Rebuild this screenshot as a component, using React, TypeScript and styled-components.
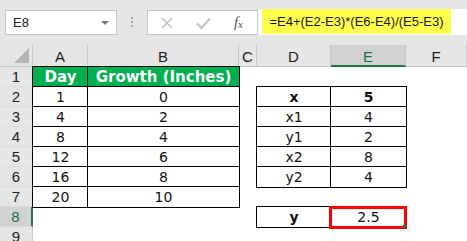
import * as React from "react"
import { styled, createGlobalStyle } from "styled-components"

const GlobalStyle = createGlobalStyle`
  html, body {
    margin: 0;
    padding: 0;
    background: #ffffff;
  }
  body {
    width: 467px;
    height: 241px;
    overflow: hidden;
  }
`

const cols = [33, 55, 151, 18, 74, 75, 61]
const colNames = ["A", "B", "C", "D", "E", "F"]

type Cell = { text?: string; bold?: boolean; green?: boolean; border?: boolean }

const rows: Cell[][] = [
  [{ text: "Day", bold: true, green: true, border: true }, { text: "Growth (Inches)", bold: true, green: true, border: true }, {}, {}, {}, {}],
  [{ text: "1", border: true }, { text: "0", border: true }, {}, { text: "x", bold: true, border: true }, { text: "5", bold: true, border: true }, {}],
  [{ text: "4", border: true }, { text: "2", border: true }, {}, { text: "x1", border: true }, { text: "4", border: true }, {}],
  [{ text: "8", border: true }, { text: "4", border: true }, {}, { text: "y1", border: true }, { text: "2", border: true }, {}],
  [{ text: "12", border: true }, { text: "6", border: true }, {}, { text: "x2", border: true }, { text: "8", border: true }, {}],
  [{ text: "16", border: true }, { text: "8", border: true }, {}, { text: "y2", border: true }, { text: "4", border: true }, {}],
  [{ text: "20", border: true }, { text: "10", border: true }, {}, {}, {}, {}],
  [{}, {}, {}, { text: "y", bold: true, border: true }, { text: "2.5", border: true }, {}],
  [{}, {}, {}, {}, {}, {}],
]

export default function App() {
  return (
    <>
      <GlobalStyle />
      <Window>
        <FormulaBar>
          <NameBox>
            <span>E8</span>
            <Caret />
          </NameBox>
          <Dots>
            <i />
            <i />
            <i />
          </Dots>
          <ButtonBox>
            <svg width="12" height="12" viewBox="0 0 12 12">
              <path d="M1 1 L11 11 M11 1 L1 11" stroke="#c4c4c4" strokeWidth="1.6" fill="none" />
            </svg>
            <svg width="15" height="12" viewBox="0 0 15 12">
              <path d="M1 6.5 L5.5 11 L14 1.5" stroke="#c4c4c4" strokeWidth="2.2" fill="none" />
            </svg>
            <Fx>
              f<sub>x</sub>
            </Fx>
          </ButtonBox>
          <FormulaInput>
            <Highlight>=E4+(E2-E3)*(E6-E4)/(E5-E3)</Highlight>
          </FormulaInput>
        </FormulaBar>
        <Sheet $cols={cols}>
          <Corner>
            <Triangle />
          </Corner>
          {colNames.map((c) => (
            <ColHead key={c} $selected={c === "E"}>
              {c}
            </ColHead>
          ))}
          {rows.map((r, ri) => (
            <React.Fragment key={ri}>
              <RowHead $selected={ri === 7}>{ri + 1}</RowHead>
              {r.map((cell, ci) => (
                <DataCell
                  key={ci}
                  $bold={!!cell.bold}
                  $green={!!cell.green}
                  $border={!!cell.border}
                >
                  {cell.text}
                  {ri === 7 && ci === 4 && (
                    <Selection>
                      <Handle />
                    </Selection>
                  )}
                </DataCell>
              ))}
            </React.Fragment>
          ))}
        </Sheet>
      </Window>
    </>
  )
}

const Window = styled.div`
  width: 467px;
  height: 241px;
  background: #e6e6e6;
  overflow: hidden;
  font-family: "DejaVu Sans", Verdana, sans-serif;
`

const FormulaBar = styled.div`
  height: 45px;
  display: flex;
  align-items: flex-start;
  padding: 9px 0 0 5px;
  box-sizing: border-box;
`

const NameBox = styled.div`
  width: 112px;
  height: 25px;
  box-sizing: border-box;
  background: #ffffff;
  border: 1px solid #c6c6c6;
  margin-top: 1px;
  display: flex;
  align-items: center;
  justify-content: space-between;
  padding: 0 7px 0 7px;
  font-family: "Liberation Sans", Arial, sans-serif;
  font-size: 13px;
  color: #222222;
`

const Caret = styled.span`
  width: 0;
  height: 0;
  border-left: 4px solid transparent;
  border-right: 4px solid transparent;
  border-top: 4px solid #777777;
`

const Dots = styled.div`
  width: 30px;
  height: 25px;
  display: flex;
  flex-direction: column;
  align-items: center;
  justify-content: center;
  gap: 2px;
  i {
    width: 2px;
    height: 2px;
    background: #a8a8a8;
  }
`

const ButtonBox = styled.div`
  width: 110px;
  height: 25px;
  margin-top: 1px;
  box-sizing: border-box;
  background: #ffffff;
  border: 1px solid #c6c6c6;
  border-right: none;
  display: flex;
  align-items: center;
  justify-content: space-between;
  padding: 0 14px 0 13px;
`

const Fx = styled.span`
  font-family: "Liberation Serif", "Times New Roman", serif;
  font-style: italic;
  font-size: 15px;
  color: #555555;
  sub {
    font-size: 11px;
    vertical-align: -1px;
  }
`

const FormulaInput = styled.div`
  flex: 1;
  height: 26px;
  box-sizing: border-box;
  background: #ffffff;
  border-left: 1px solid #c6c6c6;
  padding-left: 4px;
  display: flex;
`

const Highlight = styled.div`
  width: 189px;
  height: 25px;
  background: #ffff4d;
  font-family: "Liberation Sans", Arial, sans-serif;
  font-size: 13px;
  white-space: nowrap;
  color: #1a1a1a;
  display: flex;
  align-items: center;
  justify-content: center;
`

const Sheet = styled.div<{ $cols: number[] }>`
  display: grid;
  grid-template-columns: ${(p) => p.$cols.map((c) => `${c}px`).join(" ")};
  grid-template-rows: 22px repeat(9, 20px);
  background: #ffffff;
`

const Corner = styled.div`
  background: #e6e6e6;
  border-right: 1px solid #c8c8c8;
  border-bottom: 1px solid #c8c8c8;
  box-sizing: border-box;
  position: relative;
`

const Triangle = styled.div`
  position: absolute;
  right: 3px;
  bottom: 3px;
  width: 0;
  height: 0;
  border-left: 15px solid transparent;
  border-bottom: 15px solid #b4b4b4;
`

const ColHead = styled.div<{ $selected: boolean }>`
  background: ${(p) => (p.$selected ? "#d2d2d2" : "#e6e6e6")};
  border-right: 1px solid #c8c8c8;
  border-bottom: ${(p) => (p.$selected ? "2px solid #217346" : "1px solid #c8c8c8")};
  box-sizing: border-box;
  display: flex;
  align-items: center;
  justify-content: center;
  font-family: "Liberation Sans", Arial, sans-serif;
  font-size: 15px;
  color: ${(p) => (p.$selected ? "#217346" : "#222222")};
  padding-top: 2px;
`

const RowHead = styled.div<{ $selected: boolean }>`
  background: ${(p) => (p.$selected ? "#d2d2d2" : "#e6e6e6")};
  border-right: ${(p) => (p.$selected ? "2px solid #217346" : "1px solid #c8c8c8")};
  border-bottom: 1px solid #dcdcdc;
  box-sizing: border-box;
  display: flex;
  align-items: center;
  justify-content: center;
  font-family: "Liberation Sans", Arial, sans-serif;
  font-size: 15px;
  color: ${(p) => (p.$selected ? "#217346" : "#222222")};
`

const DataCell = styled.div<{ $bold: boolean; $green: boolean; $border: boolean }>`
  position: relative;
  box-sizing: border-box;
  background: ${(p) => (p.$green ? "#00b050" : "#ffffff")};
  color: ${(p) => (p.$green ? "#ffffff" : "#111111")};
  font-weight: ${(p) => (p.$bold ? 700 : 400)};
  font-size: ${(p) => (p.$green ? "15px" : "14px")};
  display: flex;
  align-items: center;
  justify-content: center;
  white-space: nowrap;
  outline: ${(p) => (p.$border ? "1px solid #000000" : "none")};
  outline-offset: -0.5px;
  z-index: ${(p) => (p.$border ? 1 : 0)};
`

const Selection = styled.div`
  position: absolute;
  left: -2px;
  top: -1px;
  right: -1px;
  bottom: -2px;
  border: 3px solid #ff0000;
  z-index: 2;
`

const Handle = styled.div`
  position: absolute;
  right: -2px;
  bottom: -2px;
  width: 3px;
  height: 3px;
  background: #217346;
`
